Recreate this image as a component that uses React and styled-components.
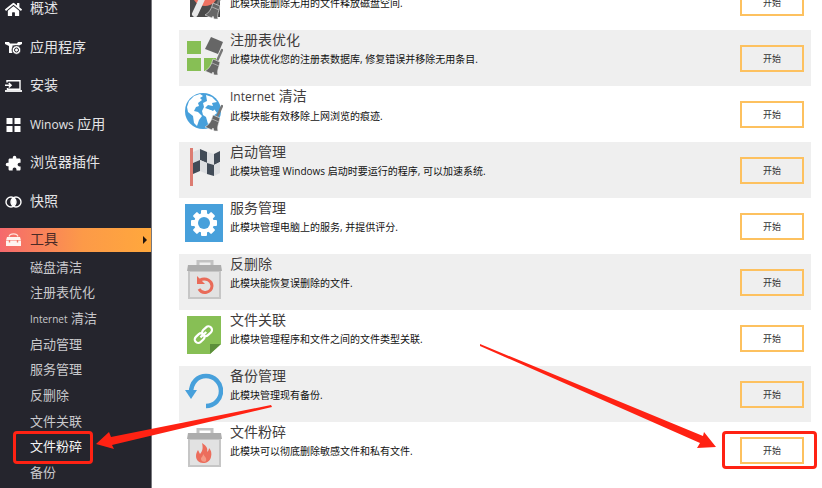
import React from "react";
import styled, { createGlobalStyle, css } from "styled-components";
import { FaHome } from "react-icons/fa";
import { MdExtension } from "react-icons/md";

const GlobalStyle = createGlobalStyle`
  * { box-sizing: border-box; }
  body {
    margin: 0;
    background: #fff;
    font-family: "Open Sans", "Noto Sans CJK SC", sans-serif;
  }
`;

const Page = styled.div`
  position: relative;
  display: flex;
  height: 100vh;
  overflow: hidden;
`;

const Sidebar = styled.aside`
  flex: 0 0 152px;
  background: #25252d;
  border-right: 1px solid #77777c;
`;

const NavList = styled.ul`
  list-style: none;
  margin: -3px 0 0;
  padding: 0;
  height: 255px;
  display: flex;
  flex-direction: column;
  justify-content: space-between;
`;

const NavLink = styled.a`
  display: flex;
  align-items: center;
  gap: 8px;
  height: 24px;
  padding: 0 4px 0 5px;
  font-size: 14px;
  line-height: 22px;
  color: #e4e4e6;
  text-decoration: none;
  white-space: nowrap;

  svg {
    flex: none;
    color: #fff;
  }

  ${(p) =>
    p.$active &&
    css`
      background: linear-gradient(90deg, #f5696d, #fc9a48 55%, #ffa83c);
      color: #4b2b27;
    `}
`;

const NavLabel = styled.span`
  height: 24px;
`;

const MirroredExtension = styled(MdExtension)`
  transform: scaleX(-1);
`;

const Caret = styled.span`
  margin-left: auto;
  border-left: 4px solid #21160f;
  border-top: 4px solid transparent;
  border-bottom: 4px solid transparent;
`;

const SubList = styled.ul`
  list-style: none;
  margin: 2px 0 0;
  padding: 0 0 0 30px;
  height: 231px;
  display: grid;
  grid-auto-rows: 1fr;
`;

const SubItem = styled.li`
  position: relative;
  display: flex;
  align-items: center;
`;

const SubLink = styled.a`
  font-size: 13px;
  line-height: 20px;
  color: ${(p) => (p.$current ? "#f4f4f4" : "#c9c9cc")};
  text-decoration: none;
`;

const Latin = styled.span`
  font-size: ${(p) => p.$size}px;
`;

const Highlight = styled.span`
  position: absolute;
  inset: ${(p) => p.$inset};
  border: 3px solid #ff2213;
  border-radius: 4px;
  pointer-events: none;
`;

const Content = styled.main`
  flex: 1;
  min-width: 0;
  padding: 0 11px 0 27px;
  overflow: hidden;
`;

const ModuleList = styled.ul`
  list-style: none;
  margin: -26px 0 0;
  padding: 0;
`;

const ModuleRow = styled.li`
  display: flex;
  align-items: flex-start;
  gap: 7px;
  height: 56px;
  padding: 0 7px 0 6px;

  &:nth-child(even) {
    background: #efefef;
  }
`;

const ModuleIcon = styled.svg`
  flex: none;
  width: 38px;
  height: 40px;
  margin-top: 6px;
`;

const ModuleText = styled.div`
  flex: 1;
  min-width: 0;
`;

const Title = styled.h2`
  margin: 0;
  font-size: 14px;
  font-weight: 400;
  line-height: 20px;
  color: #3f3c3c;
`;

const Description = styled.p`
  margin: 0;
  font-size: 10px;
  line-height: 18px;
  color: #111;
  white-space: nowrap;
`;

const ButtonSlot = styled.div`
  position: relative;
  margin-top: 15px;
`;

const StartButton = styled.button`
  display: block;
  width: 64px;
  height: 27px;
  padding: 0;
  border: 2px solid #fdc15f;
  background: transparent;
  font-family: inherit;
  font-size: 9px;
  line-height: 20px;
  color: #333;
`;

const ArrowToMenu = styled.svg`
  position: absolute;
  left: 95px;
  top: 400px;
  width: 180px;
  height: 55px;
  pointer-events: none;
`;

const ArrowToButton = styled.svg`
  position: absolute;
  right: 102px;
  top: 340px;
  width: 245px;
  height: 115px;
  pointer-events: none;
`;

const AppsIcon = () => (
  <svg width="17" height="16" viewBox="0 0 17 16">
    <path d="M0 2h4l1 1.5h7L13 2h4v2l-3 1.5H7.5V13H4V6L0 4z" fill="currentColor" />
    <circle cx="11.5" cy="10" r="4.4" fill="currentColor" stroke="#25252d" />
    <circle cx="11.5" cy="10" r="2" fill="none" stroke="#25252d" />
  </svg>
);

const InstallIcon = () => (
  <svg width="17" height="16" viewBox="0 0 17 16" fill="none" stroke="currentColor">
    <path d="M2 4.5V2.7h13v8.6H2.5V10" strokeWidth="1.4" />
    <path d="M0 7.3h5.5M3.8 5l2.4 2.3-2.4 2.3" strokeWidth="1.4" />
    <path d="M0 13h17" strokeWidth="1.8" />
  </svg>
);

const WindowsIcon = () => (
  <svg width="17" height="16" viewBox="0 0 17 16" fill="currentColor">
    <path d="M1.5 1h6v6h-6zM9.5 1h6v6h-6zM1.5 9h6v6h-6zM9.5 9h6v6h-6z" />
  </svg>
);

const SnapshotIcon = () => (
  <svg width="17" height="16" viewBox="0 0 17 16">
    <path d="M8.5 3.8a5 5 0 0 1 0 8.4a5 5 0 0 1 0-8.4z" fill="currentColor" />
    <circle cx="6" cy="8" r="5" fill="none" stroke="currentColor" strokeWidth="1.4" />
    <circle cx="11" cy="8" r="5" fill="none" stroke="currentColor" strokeWidth="1.4" />
  </svg>
);

const ToolboxIcon = () => (
  <svg width="17" height="16" viewBox="0 0 17 16">
    <path d="M4 4.5C5 1 12 1 13 4.5" fill="none" stroke="#ffe3da" strokeWidth="1.2" />
    <path d="M2 5h13l1 3.5H1z" fill="#fff4ef" />
    <path d="M1 9h15v5H1z" fill="#fff4ef" />
    <path d="M4.5 8v2.4M12.5 8v2.4" stroke="#f37c68" strokeWidth="1.4" />
  </svg>
);

const Broom = () => (
  <g>
    <path d="M37 14 32 25" stroke="#777" strokeWidth="2.4" strokeLinecap="round" />
    <path
      d="M28 23l7 3-1 4c-1 3-2 6-1 9h-4l-1-3-1 2-7-3c4-2 6-6 7-9z"
      fill="#666"
      stroke="#efefef"
      strokeWidth="0.6"
    />
    <path d="M27 27l7 3" stroke="#aaa" />
  </g>
);

const Bin = ({ children }) => (
  <>
    <path d="M13 5V1h14v4" fill="none" stroke="#c2c2c2" strokeWidth="3" />
    <path d="M4 11h31v27H4z" fill="#e2e2e2" stroke="#c6c6c6" strokeWidth="2" />
    <path d="M3 5h33l1 6H2z" fill="#adadad" />
    {children}
  </>
);

const flagEdges = [
  [8, 4],
  [15, 1],
  [22, 4],
  [29, 6],
  [35, 3],
];

const flagCells = [0, 1].flatMap((row) =>
  [0, 1, 2, 3].map((col) => {
    const [x1, y1] = flagEdges[col];
    const [x2, y2] = flagEdges[col + 1];
    const top = row * 11;
    return {
      points: `${x1},${y1 + top} ${x2},${y2 + top} ${x2},${y2 + top + 11} ${x1},${y1 + top + 11}`,
      fill: (row + col) % 2 ? "#414b57" : "#dcdee1",
    };
  })
);

const drawings = {
  disk: (
    <>
      <path d="M5 2h30v35H5z" fill="#4a4a4a" />
      <circle cx="20" cy="13" r="13" fill="#ee7261" />
      <path d="M10 34l7-15" stroke="#e9e9e9" strokeWidth="6" strokeLinecap="round" />
      <Broom />
    </>
  ),
  registry: (
    <>
      <path d="M2 5h14v13H2zM2 22h14v13H2zM19 22h12v13H19z" fill="#87bf55" />
      <path d="M26 1l12 5-5 12-13-5z" fill="#666" />
      <Broom />
    </>
  ),
  globe: (
    <>
      <circle cx="18" cy="19" r="18" fill="#47a0db" />
      <path
        d="M4 9l5-5 6-2 3 2-3 2 2 2-4 3 1 3-3 1-2 4 4 1 4 4-3 4-2 6-3-3-1-7-5-4-1-5z"
        fill="#fff"
      />
      <path d="M21 3l6 2 5 5-5 1 1 3-5-1-3 3 6 2 3-1 3 4-4 3-1 6-4 2-2-7-3-2-1-4 2-4-1-4 4-2z" fill="#fff" />
      <path d="M24 14l7 2-3 3-6-3z" fill="#47a0db" />
      <Broom />
    </>
  ),
  flag: (
    <>
      {flagCells.map((cell) => (
        <polygon key={cell.points} {...cell} />
      ))}
      <path d="M5 0h3v38H5z" fill="#dc7c72" />
    </>
  ),
  gear: (
    <>
      <path d="M0 0h38v38H0z" fill="#47a0db" />
      <g fill="#fff">
        {[0, 45, 90, 135].map((angle) => (
          <rect key={angle} x="16" y="6" width="6" height="26" rx="1" transform={`rotate(${angle} 19 19)`} />
        ))}
        <circle cx="19" cy="19" r="10" />
      </g>
      <circle cx="19" cy="19" r="6" fill="#47a0db" />
    </>
  ),
  restore: (
    <Bin>
      <path d="M15 20c6-3 12 1 12 6a7 7 0 0 1-13 3" fill="none" stroke="#e96b59" strokeWidth="3" />
      <path d="M12 16v8h8z" fill="#e96b59" />
    </Bin>
  ),
  file: (
    <>
      <path d="M2 0h34v28L25 38H2z" fill="#87bf55" />
      <path d="M36 28H25v10z" fill="#5c8f3b" />
      <g fill="none" stroke="#fff" strokeWidth="2.2" transform="rotate(-43 18 19)">
        <rect x="8" y="15.5" width="11" height="7" rx="3.5" />
        <rect x="18" y="15.5" width="11" height="7" rx="3.5" />
        <path d="M14.5 19h8" />
      </g>
    </>
  ),
  backup: (
    <>
      <path d="M6 21C6 10 13 4 21 4a15 15 0 0 1 0 30" fill="none" stroke="#47a0db" strokeWidth="4.5" />
      <path d="M0 18h12L6 27z" fill="#47a0db" />
    </>
  ),
  shred: (
    <Bin>
      <path
        d="M17 15c5 3 6 6 5 9 1-1 2-2 2-4 2 2 3 5 2 9-1 4-4 6-8 6s-7-3-7-7c0-3 1-4 2-6l2 4c3-3 3-7 2-11z"
        fill="#ec6d5c"
      />
      <path d="M18 26c2 3 4 4 3 7-2 2-5 0-5-2 0-2 2-2 2-5z" fill="#f49a86" />
    </Bin>
  ),
};

const navItems = [
  { label: "概述", icon: <FaHome size={17} /> },
  { label: "应用程序", icon: <AppsIcon /> },
  { label: "安装", icon: <InstallIcon /> },
  { latin: "Winows", label: " 应用", icon: <WindowsIcon /> },
  { label: "浏览器插件", icon: <MirroredExtension size={17} /> },
  { label: "快照", icon: <SnapshotIcon /> },
  { label: "工具", icon: <ToolboxIcon />, active: true },
];

const subItems = [
  { label: "磁盘清洁" },
  { label: "注册表优化" },
  { latin: "Internet", label: " 清洁" },
  { label: "启动管理" },
  { label: "服务管理" },
  { label: "反删除" },
  { label: "文件关联" },
  { label: "文件粉碎", current: true },
  { label: "备份" },
];

const modules = [
  { icon: "disk", title: "磁盘清洁", text: "此模块能删除无用的文件释放磁盘空间." },
  { icon: "registry", title: "注册表优化", text: "此模块优化您的注册表数据库, 修复错误并移除无用条目." },
  { icon: "globe", latin: "Internet", title: " 清洁", text: "此模块能有效移除上网浏览的痕迹." },
  { icon: "flag", title: "启动管理", text: "此模块管理 Windows 启动时要运行的程序, 可以加速系统." },
  { icon: "gear", title: "服务管理", text: "此模块管理电脑上的服务, 并提供评分." },
  { icon: "restore", title: "反删除", text: "此模块能恢复误删除的文件." },
  { icon: "file", title: "文件关联", text: "此模块管理程序和文件之间的文件类型关联." },
  { icon: "backup", title: "备份管理", text: "此模块管理现有备份." },
  { icon: "shred", title: "文件粉碎", text: "此模块可以彻底删除敏感文件和私有文件.", highlighted: true },
];

export default function App() {
  return (
    <>
      <GlobalStyle />
      <Page>
        <Sidebar>
          <nav>
            <NavList>
              {navItems.map(({ label, latin, icon, active }) => (
                <li key={label}>
                  <NavLink href="#" $active={active}>
                    {icon}
                    <NavLabel>
                      {latin && <Latin $size={12}>{latin}</Latin>}
                      {label}
                    </NavLabel>
                    {active && <Caret />}
                  </NavLink>
                </li>
              ))}
            </NavList>
            <SubList>
              {subItems.map(({ label, latin, current }) => (
                <SubItem key={label}>
                  <SubLink href="#" $current={current}>
                    {latin && <Latin $size={10}>{latin}</Latin>}
                    {label}
                  </SubLink>
                  {current && <Highlight $inset="-3px 58px -5px -17px" />}
                </SubItem>
              ))}
            </SubList>
          </nav>
        </Sidebar>
        <Content>
          <ModuleList>
            {modules.map(({ icon, title, latin, text, highlighted }) => (
              <ModuleRow key={title}>
                <ModuleIcon viewBox="0 0 38 40" aria-hidden="true">
                  {drawings[icon]}
                </ModuleIcon>
                <ModuleText>
                  <Title>
                    {latin && <Latin $size={12}>{latin}</Latin>}
                    {title}
                  </Title>
                  <Description>{text}</Description>
                </ModuleText>
                <ButtonSlot>
                  <StartButton type="button">开始</StartButton>
                  {highlighted && <Highlight $inset="-6px -13px -5px -18px" />}
                </ButtonSlot>
              </ModuleRow>
            ))}
          </ModuleList>
        </Content>
        <ArrowToMenu viewBox="95 400 180 55" aria-hidden="true">
          <path d="M96 444l13-12 2 5 160-32 1 2-160 38 2 4z" fill="#ff2213" />
        </ArrowToMenu>
        <ArrowToButton viewBox="475 340 245 115" aria-hidden="true">
          <path d="M716 447l-12-15-1 4-223-92v2l220 97-3 5z" fill="#ff2213" />
        </ArrowToButton>
      </Page>
    </>
  );
}
